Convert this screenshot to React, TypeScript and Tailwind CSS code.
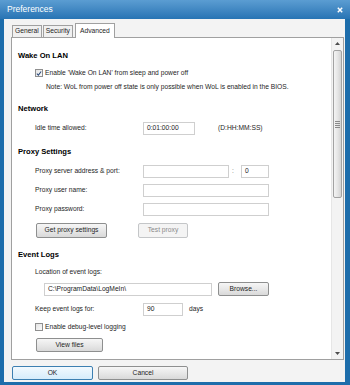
import type { ReactNode } from 'react';

const font = { fontFamily: '"Liberation Sans", Arial, sans-serif' };

function Section({ children }: { children: ReactNode }) {
  return <div className="flex h-[10px] items-center pl-[6px] text-[7.6px] font-bold text-black">{children}</div>;
}

function Label({ children }: { children: ReactNode }) {
  return <div className="w-[108px] shrink-0">{children}</div>;
}

function Input({ value = '', className = '' }: { value?: string; className?: string }) {
  return (
    <div
      className={`flex h-[13px] items-center border border-[#cfcfcf] bg-white pl-[3px] text-[6.7px] text-[#222] ${className}`}
    >
      {value}
    </div>
  );
}

function Btn({
  children,
  className = '',
  disabled = false,
}: {
  children: ReactNode;
  className?: string;
  disabled?: boolean;
}) {
  return (
    <div
      className={`flex items-center justify-center rounded-[2px] border text-[6.7px] ${
        disabled
          ? 'border-[#c4c6c8] bg-[#f4f4f4] text-[#8a8a8a]'
          : 'border-[#8e8f8f] bg-gradient-to-b from-[#f6f6f6] via-[#e8e8e8] to-[#d9d9d9] text-[#1e1e1e]'
      } ${className}`}
    >
      {children}
    </div>
  );
}

function Check({ checked }: { checked?: boolean }) {
  return (
    <div className="flex h-[8px] w-[8px] shrink-0 items-center justify-center border border-[#8f8f8f] bg-gradient-to-br from-[#e4e4e4] to-[#fafafa]">
      {checked && (
        <svg width="7" height="7" viewBox="0 0 7 7">
          <path d="M1 3.6 L2.8 5.4 L6 1.2" fill="none" stroke="#2b4a7a" strokeWidth="1.2" />
        </svg>
      )}
    </div>
  );
}

function Tab({ label, active }: { label: string; active?: boolean }) {
  return (
    <div
      className={`flex items-center border border-b-0 border-[#a0a0a0] text-[6.7px] text-[#1e1e1e] ${
        active ? 'relative -mb-px ml-px h-[15px] bg-white px-[4px]' : 'h-[12px] bg-[#f0f0f0] px-[2px]'
      }`}
    >
      {label}
    </div>
  );
}

function ScrollBar() {
  return (
    <div className="flex w-[12px] shrink-0 flex-col border-l border-[#e6e6e6] bg-[#f3f3f3]">
      <div className="flex h-[11px] items-center justify-center">
        <svg width="5" height="3" viewBox="0 0 5 3">
          <path d="M0 3 L2.5 0 L5 3 Z" fill="#4d4d4d" />
        </svg>
      </div>
      <div className="mx-[1px] mt-px flex h-[148px] items-center justify-center rounded-[2px] border border-[#a2a2a2] bg-gradient-to-r from-[#f4f4f4] via-[#e6e6e6] to-[#d3d3d3]">
        <div className="flex flex-col gap-[1px]">
          <div className="h-px w-[5px] bg-[#8a8a8a]" />
          <div className="h-px w-[5px] bg-[#8a8a8a]" />
          <div className="h-px w-[5px] bg-[#8a8a8a]" />
          <div className="h-px w-[5px] bg-[#8a8a8a]" />
        </div>
      </div>
      <div className="flex-1" />
      <div className="flex h-[11px] items-center justify-center">
        <svg width="5" height="3" viewBox="0 0 5 3">
          <path d="M0 0 L2.5 3 L5 0 Z" fill="#4d4d4d" />
        </svg>
      </div>
    </div>
  );
}

export default function App() {
  return (
    <div className="flex h-[385px] w-[350px] flex-col bg-[#1d6dab]" style={font}>
      <div className="flex h-[19px] items-center justify-between bg-gradient-to-b from-[#5b9dd2] to-[#2774b4] pl-[7px] pr-[7px]">
        <span className="text-[8.5px] text-white">Preferences</span>
        <svg width="6" height="6" viewBox="0 0 6 6">
          <path d="M0.8 0.8 L5.2 5.2 M5.2 0.8 L0.8 5.2" stroke="#ffffff" strokeWidth="1.5" />
        </svg>
      </div>

      <div className="mb-[3px] ml-[4px] mr-[5px] flex flex-1 flex-col bg-[#f3f3f3]">
        <div className="flex h-[18px] items-end gap-px pl-[8px]">
          <Tab label="General" />
          <Tab label="Security" />
          <Tab label="Advanced" active />
        </div>

        <div className="ml-[7px] mr-[1px] flex h-[323px] border border-[#a0a0a0] bg-white">
          <div className="flex flex-1 flex-col overflow-hidden text-[6.7px] text-[#1e1e1e]">
            <div className="mt-[13px]">
              <Section>Wake On LAN</Section>
            </div>
            <div className="mt-[7px] flex h-[10px] items-center gap-[2px] pl-[23px]">
              <Check checked />
              <span>Enable 'Wake On LAN' from sleep and power off</span>
            </div>
            <div className="mt-[4px] flex h-[10px] items-center pl-[34px]">
              Note: WoL from power off state is only possible when WoL is enabled in the BIOS.
            </div>

            <div className="mt-[12px]">
              <Section>Network</Section>
            </div>
            <div className="mt-[8px] flex h-[13px] items-center pl-[23px]">
              <Label>Idle time allowed:</Label>
              <Input value="0:01:00:00" className="w-[52px]" />
              <span className="ml-[23px]">(D:HH:MM:SS)</span>
            </div>

            <div className="mt-[12px]">
              <Section>Proxy Settings</Section>
            </div>
            <div className="mt-[8px] flex h-[13px] items-center pl-[23px]">
              <Label>Proxy server address &amp; port:</Label>
              <Input className="w-[86px]" />
              <span className="ml-[3px] w-[9px] text-[#777]">:</span>
              <Input value="0" className="w-[28px]" />
            </div>
            <div className="mt-[6px] flex h-[13px] items-center pl-[23px]">
              <Label>Proxy user name:</Label>
              <Input className="w-[126px]" />
            </div>
            <div className="mt-[6px] flex h-[13px] items-center pl-[23px]">
              <Label>Proxy password:</Label>
              <Input className="w-[126px]" />
            </div>
            <div className="mt-[7px] flex h-[15px] items-stretch gap-[31px] pl-[24px]">
              <Btn className="w-[71px]">Get proxy settings</Btn>
              <Btn className="w-[50px]" disabled>
                Test proxy
              </Btn>
            </div>

            <div className="mt-[12px]">
              <Section>Event Logs</Section>
            </div>
            <div className="mt-[7px] flex h-[10px] items-center pl-[23px]">Location of event logs:</div>
            <div className="mt-[5px] flex h-[14px] items-center pl-[32px]">
              <Input value="C:\ProgramData\LogMeIn\" className="w-[168px]" />
              <Btn className="ml-[6px] h-[14px] w-[51px]">Browse...</Btn>
            </div>
            <div className="mt-[7px] flex h-[13px] items-center pl-[23px]">
              <Label>Keep event logs for:</Label>
              <Input value="90" className="w-[40px]" />
              <span className="ml-[6px]">days</span>
            </div>
            <div className="mt-[6px] flex h-[10px] items-center gap-[2px] pl-[23px]">
              <Check />
              <span>Enable debug-level logging</span>
            </div>
            <div className="mt-[6px] flex h-[14px] pl-[24px]">
              <Btn className="w-[67px]">View files</Btn>
            </div>
          </div>
          <ScrollBar />
        </div>

        <div className="mt-[6px] flex h-[14px] gap-[5px] pl-[8px]">
          <div className="flex w-[81px] items-center justify-center rounded-[2px] border border-[#3c7fb1] bg-gradient-to-b from-[#f2f9fe] to-[#d6ecfb] text-[6.7px] text-[#1e1e1e]">
            OK
          </div>
          <Btn className="w-[90px]">Cancel</Btn>
        </div>
      </div>
    </div>
  );
}
